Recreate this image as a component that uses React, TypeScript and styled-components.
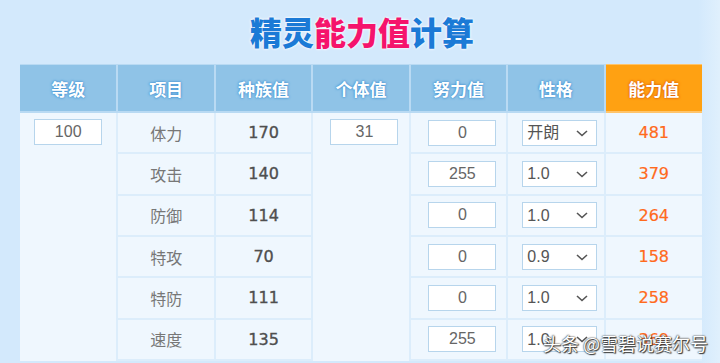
import React from "react";
import styled, { createGlobalStyle } from "styled-components";

const Global = createGlobalStyle`
  html, body { margin: 0; padding: 0; }
  body {
    background: #d3e9fc;
    font-family: "DejaVu Sans", "Noto Sans CJK SC", sans-serif;
  }
`;

const Page = styled.div`
  position: relative;
  width: 720px;
  height: 363px;
  overflow: hidden;
  background: linear-gradient(90deg, #d3e9fc 0%, #d3e9fc 97%, #e0f0fd 100%);
`;

const Title = styled.h1`
  margin: 0;
  height: 64px;
  display: flex;
  align-items: center;
  justify-content: center;
  padding-bottom: 3px;
  padding-left: 4px;
  box-sizing: border-box;
  font-family: "Noto Sans CJK SC", sans-serif;
  font-size: 32px;
  font-weight: 900;
  text-shadow: 0 0 3px #ffffff, 0 0 2px #ffffff;
`;

const TitlePart = styled.span<{ $tone: "blue" | "pink" }>`
  color: ${(p) => (p.$tone === "blue" ? "#1b7ad6" : "#f5146c")};
`;

const Table = styled.table`
  margin-left: 20px;
  width: 682px;
  border-collapse: collapse;
  table-layout: fixed;
  background: #eff7fe;
`;

const Head = styled.th<{ $accent?: boolean }>`
  height: 46px;
  padding: 0;
  background: ${(p) => (p.$accent ? "#ffa112" : "#8fc3e7")};
  border-left: 2px solid #b9daf3;
  border-right: 2px solid #b9daf3;
  border-top: 1px solid #b9daf3;
  border-bottom: 2px solid #b9daf3;
  color: #ffffff;
  font-family: "Noto Sans CJK SC", sans-serif;
  font-size: 17px;
  font-weight: 700;
  text-shadow: ${(p) =>
    p.$accent
      ? "0 0 2px #d95a06, 0 0 3px #e46a10"
      : "0 0 2px #3d8fd1, 0 0 3px #4a9ad8"};
  &:last-child { border-right: none; border-color: #ffc46a; }
  &:first-child { border-left: none; }
`;

const Row = styled.tr`
  height: 41.33px;
`;

const Cell = styled.td<{ $tone?: "label" | "base" | "result" | "field" }>`
  padding: 0 0 0 ${(p) => (p.$tone === "field" ? "8px" : "0")};
  text-align: center;
  vertical-align: middle;
  border: 2px solid #dcedfb;
  font-size: 16px;
  color: ${(p) =>
    p.$tone === "result" ? "#ff6a1c" : p.$tone === "base" ? "#4f4f4f" : "#777777"};
  font-family: ${(p) =>
    p.$tone === "label"
      ? `"Noto Sans CJK SC", sans-serif`
      : `"DejaVu Sans", "Noto Sans CJK SC", sans-serif`};
  -webkit-text-stroke: ${(p) =>
    p.$tone === "base" ? "0.35px #4f4f4f" : p.$tone === "result" ? "0.2px #ff6a1c" : "0"};
  &:first-child { border-left: none; }
  &:last-child { border-right: none; }
`;

const SpanCell = styled.td<{ $shift?: boolean }>`
  padding: 6px 0 0 ${(p) => (p.$shift ? "7px" : "0")};
  text-align: center;
  vertical-align: top;
  border-left: 2px solid #dcedfb;
  border-right: 2px solid #dcedfb;
  &:first-child { border-left: none; }
`;

const NumInput = styled.input`
  box-sizing: border-box;
  width: 68px;
  height: 26px;
  border: 1px solid #b7d5ec;
  background: #ffffff;
  text-align: center;
  font-family: "Liberation Sans", sans-serif;
  font-size: 16px;
  color: #666666;
  padding: 0;
  outline: none;
  display: block;
  margin: 0 auto;
`;

const SelectWrap = styled.div`
  position: relative;
  width: 75px;
  height: 26px;
  margin: 0 auto;
`;

const Select = styled.select`
  box-sizing: border-box;
  appearance: none;
  -webkit-appearance: none;
  width: 75px;
  height: 26px;
  border: 1px solid #b7d5ec;
  background: #ffffff;
  font-family: "Liberation Sans", "Noto Sans CJK SC", sans-serif;
  font-size: 16px;
  color: #555555;
  padding: 0 0 0 4px;
  outline: none;
  border-radius: 0;
`;

const Chevron = styled.svg`
  position: absolute;
  right: 9px;
  top: 10px;
  pointer-events: none;
`;

const Watermark = styled.div`
  position: absolute;
  left: 543px;
  top: 330px;
  font-family: "Noto Sans CJK SC", sans-serif;
  font-size: 18px;
  color: #ffffff;
  white-space: nowrap;
  text-shadow: 0 0 1px #333, 0 0 2px #444, 1px 1px 1px #333;
`;

type Stat = { label: string; base: number; ev: number; nature: string; result: number };

const stats: Stat[] = [
  { label: "体力", base: 170, ev: 0, nature: "开朗", result: 481 },
  { label: "攻击", base: 140, ev: 255, nature: "1.0", result: 379 },
  { label: "防御", base: 114, ev: 0, nature: "1.0", result: 264 },
  { label: "特攻", base: 70, ev: 0, nature: "0.9", result: 158 },
  { label: "特防", base: 111, ev: 0, nature: "1.0", result: 258 },
  { label: "速度", base: 135, ev: 255, nature: "1.0", result: 369 },
];

const NatureSelect = ({ value }: { value: string }) => (
  <SelectWrap>
    <Select defaultValue={value}>
      <option>{value}</option>
    </Select>
    <Chevron width="12" height="7" viewBox="0 0 12 7">
      <path d="M1 1 L6 5.5 L11 1" fill="none" stroke="#555" strokeWidth="1.6" />
    </Chevron>
  </SelectWrap>
);

export default function App() {
  return (
    <Page>
      <Global />
      <Title>
        <TitlePart $tone="blue">精灵</TitlePart>
        <TitlePart $tone="pink">能力值</TitlePart>
        <TitlePart $tone="blue">计算</TitlePart>
      </Title>
      <Table>
        <thead>
          <tr>
            <Head>等级</Head>
            <Head>项目</Head>
            <Head>种族值</Head>
            <Head>个体值</Head>
            <Head>努力值</Head>
            <Head>性格</Head>
            <Head $accent>能力值</Head>
          </tr>
        </thead>
        <tbody>
          {stats.map((s, i) => (
            <Row key={s.label}>
              {i === 0 && (
                <SpanCell rowSpan={6}>
                  <NumInput defaultValue="100" />
                </SpanCell>
              )}
              <Cell $tone="label">{s.label}</Cell>
              <Cell $tone="base">{s.base}</Cell>
              {i === 0 && (
                <SpanCell rowSpan={6} $shift>
                  <NumInput defaultValue="31" />
                </SpanCell>
              )}
              <Cell $tone="field">
                <NumInput defaultValue={String(s.ev)} />
              </Cell>
              <Cell $tone="field">
                <NatureSelect value={s.nature} />
              </Cell>
              <Cell $tone="result">{s.result}</Cell>
            </Row>
          ))}
        </tbody>
      </Table>
      <Watermark>头条 @雪碧说赛尔号</Watermark>
    </Page>
  );
}
